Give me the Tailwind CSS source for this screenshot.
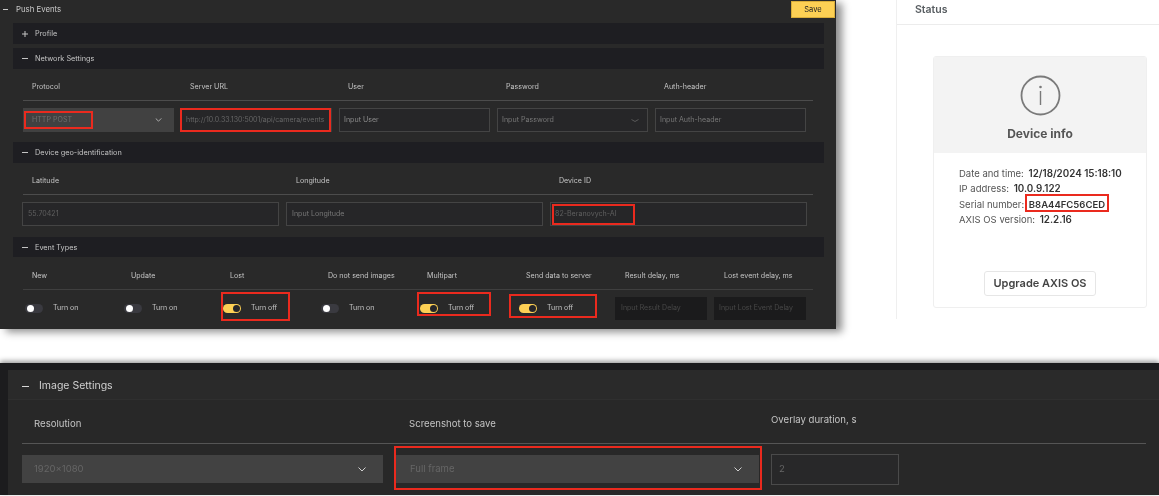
<!DOCTYPE html>
<html lang="en">
<head>
    <meta charset="UTF-8">
    <meta name="viewport" content="width=device-width, initial-scale=1.0">
    <title>Push Events</title>
    <script src="https://cdn.jsdelivr.net/npm/@tailwindcss/browser@4"></script>
</head>
<body class="bg-white">
<div class="relative w-[1159px] h-[496px] overflow-hidden bg-white font-['Inter',sans-serif] blur-[0.45px]">

    <div class="flex items-start h-[329px]">
        <!-- Push Events panel -->
        <section class="w-[836px] h-[329px] shrink-0 bg-[#292929] text-[7.1px] text-[#c4c4c4] shadow-[6px_3px_8px_rgba(0,0,0,0.45)]">
            <div class="flex items-center h-[18px] pl-[3px] text-[#c8c8c8] text-[7.8px]">
                <span class="w-[5px] h-px bg-[#c8c8c8] mr-[8px]"></span><span class="pt-px">Push Events</span>
                <button class="ml-auto mr-px w-[44px] h-[17px] bg-[#fdd054] border border-[#d9ad3a] text-[#222] text-[7.5px] pt-px">Save</button>
            </div>

            <div class="mt-[5px] mx-[13px] w-[811px] h-[21px] bg-[#1e1e22] flex items-center pl-[9px] text-[7.3px] text-[#c4c4c4]">
                <svg class="w-[6px] h-[6px] mr-[7px]" viewBox="0 0 6 6" stroke="#c4c4c4" stroke-width="1"><path d="M0 3h6M3 0v6"/></svg><span class="pt-[2px]">Profile</span>
            </div>
            <div class="mt-[4px] mx-[13px] w-[811px] h-[21px] bg-[#1e1e22] flex items-center pl-[9px] text-[7.3px] text-[#c4c4c4]">
                <span class="w-[6px] h-px bg-[#c4c4c4] mr-[7px]"></span><span class="pt-[2px]">Network Settings</span>
            </div>

            <!-- Network settings -->
            <div class="ml-[23px] w-[790px] h-[32px] border-b border-[#4c4c4c] grid grid-cols-[151px_151px_151px_151px_151px] gap-x-[7px] items-center pt-[5px]">
                <span class="pl-[9px]">Protocol</span>
                <span class="pl-[9px]">Server URL</span>
                <span class="pl-[9px]">User</span>
                <span class="pl-[9px]">Password</span>
                <span class="pl-[9px]">Auth-header</span>
            </div>
            <div class="ml-[23px] mt-[7px] grid grid-cols-[151px_151px_151px_151px_151px] gap-x-[7px] h-[24px]">
                <div class="bg-[#414141] flex items-center justify-between pl-[9px] pr-[12px] text-[#6e6e6e]">
                    HTTP POST
                    <svg class="w-[7px] h-[4px]" viewBox="0 0 8 5" fill="none" stroke="#c8c8c8" stroke-width="1"><path d="M0.5 0.5 4 4 7.5 0.5"/></svg>
                </div>
                <div class="border border-[#3d3d3d] bg-[#262628] flex items-center pl-[4px] text-[7px] text-[#666] whitespace-nowrap">http://10.0.33.130:5001/api/camera/events</div>
                <div class="border border-[#444] bg-[#262628] flex items-center pl-[4px] text-[#8b8b8b]">Input User</div>
                <div class="border border-[#444] bg-[#262628] flex items-center justify-between pl-[4px] pr-[8px] text-[#777]">
                    Input Password
                    <svg class="w-[8px] h-[3px]" viewBox="0 0 8 3" fill="none" stroke="#666" stroke-width="0.8"><path d="M0.5 0.5 4 2.5 7.5 0.5"/></svg>
                </div>
                <div class="border border-[#444] bg-[#262628] flex items-center pl-[4px] text-[#777]">Input Auth-header</div>
            </div>

            <div class="mt-[10px] mx-[13px] w-[811px] h-[21px] bg-[#1e1e22] flex items-center pl-[9px] text-[7.3px] text-[#c4c4c4]">
                <span class="w-[6px] h-px bg-[#c4c4c4] mr-[7px]"></span><span class="pt-[2px]">Device geo-identification</span>
            </div>

            <!-- Geo -->
            <div class="ml-[23px] w-[790px] h-[32px] border-b border-[#4c4c4c] grid grid-cols-[257px_257px_257px] gap-x-[7px] items-center pt-[5px]">
                <span class="pl-[9px]">Latitude</span>
                <span class="pl-[9px]">Longitude</span>
                <span class="pl-[8px]">Device ID</span>
            </div>
            <div class="ml-[22px] mt-[7px] grid grid-cols-[257px_257px_257px] gap-x-[7px] h-[24px]">
                <div class="border border-[#444] bg-[#262628] flex items-center pl-[5px] text-[#5f5f5f]">55.70421</div>
                <div class="border border-[#444] bg-[#262628] flex items-center pl-[5px] text-[#777]">Input Longitude</div>
                <div class="border border-[#444] bg-[#262628] flex items-center pl-[4px] text-[#5f5f5f]">82-Beranovych-AI</div>
            </div>

            <div class="mt-[11px] mx-[13px] w-[811px] h-[20px] bg-[#1e1e22] flex items-center pl-[9px] text-[7.3px] text-[#c4c4c4]">
                <span class="w-[6px] h-px bg-[#c4c4c4] mr-[7px]"></span><span class="pt-[2px]">Event Types</span>
            </div>

            <!-- Events -->
            <div class="ml-[23px] w-[790px] h-[33px] border-b border-[#3f3f3f] grid grid-cols-[99px_99px_99px_99px_99px_99px_99px_97px] items-center pt-[6px]">
                <span class="pl-[9px]">New</span>
                <span class="pl-[9px]">Update</span>
                <span class="pl-[9px]">Lost</span>
                <span class="pl-[8px]">Do not send images</span>
                <span class="pl-[8px]">Multipart</span>
                <span class="pl-[8px]">Send data to server</span>
                <span class="pl-[8px]">Result delay, ms</span>
                <span class="pl-[8px]">Lost event delay, ms</span>
            </div>
            <div class="ml-[23px] grid grid-cols-[99px_99px_99px_99px_99px_99px_99px_97px] h-[39px] items-center pb-[3px] text-[7px]">
                <div class="flex items-center pl-[2px] gap-[10px]">
                    <span class="w-[18px] h-[9px] rounded-full bg-[#3a3a40] flex items-center pl-[2px]"><span class="w-[7px] h-[7px] rounded-full bg-white"></span></span>Turn on
                </div>
                <div class="flex items-center pl-[2px] gap-[10px]">
                    <span class="w-[18px] h-[9px] rounded-full bg-[#3a3a40] flex items-center pl-[2px]"><span class="w-[7px] h-[7px] rounded-full bg-white"></span></span>Turn on
                </div>
                <div class="flex items-center pl-[2px] gap-[10px]">
                    <span class="w-[18px] h-[9px] rounded-full bg-[#fdd054] flex items-center justify-end pr-[1px]"><span class="w-[7px] h-[7px] rounded-full bg-[#26262a]"></span></span>Turn off
                </div>
                <div class="flex items-center pl-[1px] gap-[10px]">
                    <span class="w-[18px] h-[9px] rounded-full bg-[#3a3a40] flex items-center pl-[2px]"><span class="w-[7px] h-[7px] rounded-full bg-white"></span></span>Turn on
                </div>
                <div class="flex items-center pl-[1px] gap-[10px]">
                    <span class="w-[18px] h-[9px] rounded-full bg-[#fdd054] flex items-center justify-end pr-[1px]"><span class="w-[7px] h-[7px] rounded-full bg-[#26262a]"></span></span>Turn off
                </div>
                <div class="flex items-center pl-[1px] gap-[10px]">
                    <span class="w-[18px] h-[9px] rounded-full bg-[#fdd054] flex items-center justify-end pr-[1px]"><span class="w-[7px] h-[7px] rounded-full bg-[#26262a]"></span></span>Turn off
                </div>
                <div class="h-[23px] w-[92px] -ml-[2px] mt-[1px] bg-[#1b1b1c] flex items-center pl-[6px] text-[#484848]">Input Result Delay</div>
                <div class="h-[23px] w-[92px] -ml-[2px] mt-[1px] bg-[#1b1b1c] flex items-center pl-[5px] text-[#484848]">Input Lost Event Delay</div>
            </div>
        </section>

        <!-- Status panel -->
        <section class="ml-[60px] w-[263px] h-[319px] border-l border-[#efefef] text-[#333]">
            <div class="h-[25px] border-b border-[#ececec] pl-[18px] flex items-center pb-[4px] text-[10.5px] font-semibold text-[#5a5f63]">Status</div>
            <div class="ml-[36px] mt-[31px] w-[214px] h-[252px] rounded-[3px] border border-[#efefef] overflow-hidden">
                <div class="h-[96px] bg-[#f3f3f3] flex flex-col items-center pt-[18px]">
                    <svg class="w-[41px] h-[41px]" viewBox="0 0 41 41" fill="none">
                        <circle cx="20.5" cy="20.5" r="19" stroke="#7a7a7a" stroke-width="1.8"/>
                        <circle cx="20.5" cy="12" r="1.3" fill="#7a7a7a"/>
                        <path d="M20.5 16v14" stroke="#7a7a7a" stroke-width="1.4"/>
                    </svg>
                    <div class="mt-[9px] text-[12px] font-bold text-[#555]">Device info</div>
                </div>
                <div class="pl-[25px] pt-[13px] text-[9.5px] leading-[15.3px] text-[#555]">
                    <div>Date and time: <b class="ml-[2px] font-semibold text-[#333] text-[9.8px]">12/18/2024 15:18:10</b></div>
                    <div>IP address: <b class="ml-[2px] font-semibold text-[#333] text-[9.8px]">10.0.9.122</b></div>
                    <div>Serial number: <b class="ml-[2px] font-semibold text-[#333]">B8A44FC56CED</b></div>
                    <div>AXIS OS version: <b class="ml-[2px] font-semibold text-[#333] text-[9.8px]">12.2.16</b></div>
                </div>
                <button class="block mx-auto mt-[44px] w-[112px] h-[25px] rounded-[3px] border border-[#e6e6e6] bg-white text-[11px] font-semibold text-[#444]">Upgrade AXIS OS</button>
            </div>
        </section>
    </div>

    <!-- Image Settings panel -->
    <section class="mt-[34px] h-[132px] bg-[#1c1c1e] pl-[8px] pt-[7px] shadow-[0_-2px_5px_rgba(0,0,0,0.4)]">
        <div class="h-[125px] bg-[#282828] text-[#c4c4c4]">
            <div class="h-[30px] bg-[#2a2a2a] border-b border-[#2f2f2f] flex items-center pl-[14px] pt-[3px] text-[10.5px] text-[#d0d0d0]">
                <span class="w-[7px] h-px bg-[#d8d8d8] mr-[10px]"></span>Image Settings
            </div>
            <div class="ml-[14px] w-[1124px] h-[44px] border-b border-[#555] grid grid-cols-[361px_365px_128px] gap-x-[11px] text-[9.6px]">
                <span class="pl-[12px] pt-[17px]">Resolution</span>
                <span class="pl-[15px] pt-[17px]">Screenshot to save</span>
                <span class="pl-[1px] pt-[13px] whitespace-nowrap">Overlay duration, s</span>
            </div>
            <div class="ml-[14px] mt-[10px] grid grid-cols-[361px_364px_128px] gap-x-[12px] h-[31px] text-[9.5px]">
                <div class="mt-px h-[28px] bg-[#424242] flex items-center justify-between pl-[12px] pr-[17px] text-[#666]">
                    1920x1080
                    <svg class="w-[8px] h-[5px]" viewBox="0 0 8 5" fill="none" stroke="#d0d0d0" stroke-width="1"><path d="M0.5 0.5 4 4 7.5 0.5"/></svg>
                </div>
                <div class="mt-px h-[28px] bg-[#424242] flex items-center justify-between pl-[15px] pr-[17px] text-[#666]">
                    Full frame
                    <svg class="w-[8px] h-[5px]" viewBox="0 0 8 5" fill="none" stroke="#d0d0d0" stroke-width="1"><path d="M0.5 0.5 4 4 7.5 0.5"/></svg>
                </div>
                <div class="border border-[#4a4a4a] bg-[#282829] flex items-center pl-[7px] text-[#666]">2</div>
            </div>
        </div>
    </section>

    <!-- Red annotation boxes -->
    <div class="absolute left-[24px] top-[111px] w-[69px] h-[18px] border-2 border-[#ea2a1e]"></div>
    <div class="absolute left-[180px] top-[108px] w-[151px] h-[24px] border-2 border-[#ea2a1e]"></div>
    <div class="absolute left-[552px] top-[204px] w-[83px] h-[21px] border-2 border-[#ea2a1e]"></div>
    <div class="absolute left-[221px] top-[292px] w-[69px] h-[29px] border-2 border-[#ea2a1e]"></div>
    <div class="absolute left-[417px] top-[292px] w-[74px] h-[24px] border-2 border-[#ea2a1e]"></div>
    <div class="absolute left-[509px] top-[294px] w-[88px] h-[24px] border-2 border-[#ea2a1e]"></div>
    <div class="absolute left-[1025px] top-[194px] w-[84px] h-[18px] border-2 border-[#ea2a1e]"></div>
    <div class="absolute left-[394px] top-[446px] w-[368px] h-[44px] border-2 border-[#ea2a1e]"></div>
</div>
</body>
</html>
